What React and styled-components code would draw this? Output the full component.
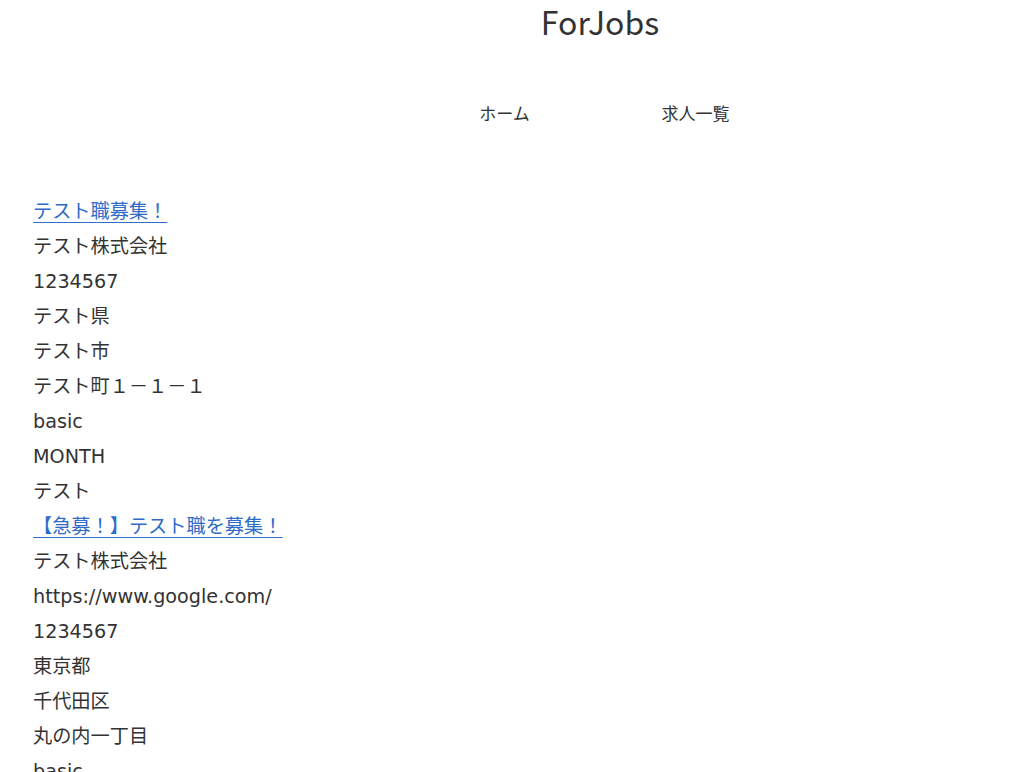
import React from "react";
import styled, { createGlobalStyle } from "styled-components";

const Global = createGlobalStyle`
  html, body { margin: 0; padding: 0; background: #ffffff; }
  body {
    font-family: "Noto Sans CJK JP", "Noto Sans", sans-serif;
    color: #333333;
  }
`;

const Header = styled.header`
  display: flex;
  flex-direction: column;
  align-items: center;
  padding-left: 176px;
`;

const Title = styled.h1`
  margin: 0;
  font-size: 32px;
  font-weight: 400;
  line-height: 42px;
  color: #333333;
`;

const Nav = styled.nav`
  display: flex;
  margin-top: 59px;
`;

const NavItem = styled.a`
  display: block;
  width: 191px;
  text-align: center;
  font-size: 17px;
  line-height: 24px;
  color: #333333;
  text-decoration: none;
`;

const Main = styled.main`
  padding: 69px 0 0 33px;
`;

const Line = styled.p`
  margin: 0;
  font-family: "DejaVu Sans", "Noto Sans CJK JP", sans-serif;
  font-size: 19.2px;
  line-height: 35px;
  color: #333333;
`;

const JobLink = styled.a`
  color: #2f6bc8;
  text-decoration: underline;
  text-underline-offset: 4px;
  text-decoration-thickness: 1px;
`;

const jobs = [
  {
    title: "テスト職募集！",
    lines: ["テスト株式会社", "1234567", "テスト県", "テスト市", "テスト町１－１－１", "basic", "MONTH", "テスト"],
  },
  {
    title: "【急募！】テスト職を募集！",
    lines: ["テスト株式会社", "https://www.google.com/", "1234567", "東京都", "千代田区", "丸の内一丁目", "basic", "MONTH", "テスト"],
  },
];

export default function App() {
  return (
    <>
      <Global />
      <Header>
        <Title>ForJobs</Title>
        <Nav>
          <NavItem href="#">ホーム</NavItem>
          <NavItem href="#">求人一覧</NavItem>
        </Nav>
      </Header>
      <Main>
        {jobs.map((job, i) => (
          <React.Fragment key={i}>
            <Line>
              <JobLink href="#">{job.title}</JobLink>
            </Line>
            {job.lines.map((l, j) => (
              <Line key={j}>{l}</Line>
            ))}
          </React.Fragment>
        ))}
      </Main>
    </>
  );
}
